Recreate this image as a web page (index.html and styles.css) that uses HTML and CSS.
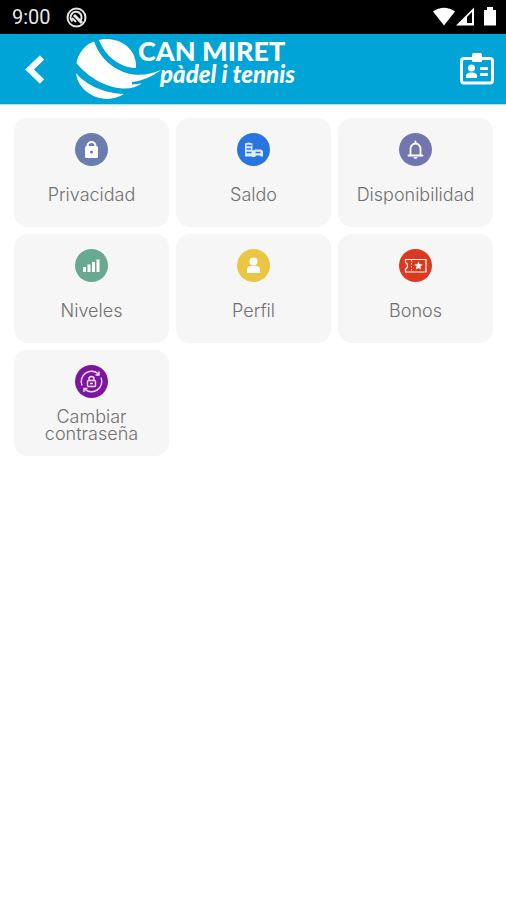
FILE: index.html
```html
<!DOCTYPE html>
<html lang="es">
<head>
<meta charset="utf-8">
<meta name="viewport" content="width=device-width, initial-scale=1">
<title>Can Miret</title>
<link rel="stylesheet" href="styles.css">
</head>
<body>
<div class="status">
  <span class="clock">9:00</span>
  <svg class="status-app" width="21" height="21" viewBox="0 0 21 21" fill="none" stroke="#e6e6e6" stroke-width="2"><circle cx="10.500" cy="10.500" r="9"/><path d="M6.500 14.500a5.500 5.500 0 1 1 8-1"/><path d="M8 8l8 8" stroke-width="3"/><path d="M6 11l4 4"/></svg>
  <svg class="status-signals" width="64" height="20" viewBox="0 0 64 20" fill="#fff"><path d="M0 4.500Q11 -3 22 4.500L11 18.500Z"/><path d="M23 18.500L41 0.500V18.500Z"/><path d="M34 10L39 5V16H34Z" fill="#000"/><path d="M51 3h3V0h6v3h3v15.500H51Z"/></svg>
</div>
<header class="bar">
  <button class="icon-button" aria-label="Volver"><svg width="20" height="29" viewBox="0 0 20 29" fill="none" stroke="#fff" stroke-width="6"><path d="M17 2.500L4.500 14.500L17 26.500"/></svg></button>
  <div class="brand">
    <svg class="brand-ball" width="86" height="64" viewBox="0 0 86 64" fill="#fff"><path d="M18 4.500C8 8 2 17 0.500 26C10 38 27 50 46 51.500C54 52 61 50 66 46.500L56 47.500V45Q72 43 85 33C76 37 66 38.500 58 37.500C38 35 24 21 18 4.500Z"/><path d="M23 3C37 -1 61 7 60 31C44 31 29 19 23 3Z"/><path d="M0 36C8 46 25 56 48 57C39 63 25 64 14 57C6 52 1 45 0 36Z"/></svg>
    <div class="brand-text">
      <span class="brand-name">CAN MIRET</span>
      <span class="brand-sub">pàdel i tennis</span>
    </div>
  </div>
  <button class="icon-button" aria-label="Carnet"><svg width="36" height="32" viewBox="0 0 36 32" fill="#fff"><rect x="2.500" y="5.500" width="31" height="24.500" rx="2.500" fill="none" stroke="#fff" stroke-width="3"/><rect x="13" y="0" width="10" height="9" rx="1.500"/><circle cx="12.500" cy="15" r="3.500"/><path d="M7 25v-2q0-3 4-3.500h3q4 .5 4 3.500v2Z"/><rect x="21" y="14" width="8" height="3" rx="1"/><rect x="21" y="20" width="8" height="3" rx="1"/></svg></button>
</header>
<main class="tiles">
  <button class="tile"><svg class="tile-icon" viewBox="0 0 33 33"><circle cx="16.500" cy="16.500" r="16.500" fill="#6b7caf"/><rect x="10" y="13" width="13" height="12" rx="1.500" fill="#fff"/><path d="M12.500 14v-1a4 4 0 0 1 8 0v1" fill="none" stroke="#fff" stroke-width="2"/><circle cx="16.500" cy="19" r="1.500" fill="#6b7caf"/></svg><span class="tile-label">Privacidad</span></button>
  <button class="tile"><svg class="tile-icon" viewBox="0 0 33 33"><circle cx="16.500" cy="16.500" r="16.500" fill="#2875df"/><path d="M8 10.500l3.500-1 4 1V23.500H8ZM15 18l3-1.500h6l2 1.500v5.500h-2l-1-1h-4l-1 1.500h-3Z" fill="#dcecff"/><path d="M9.500 12.500h5M9.500 16h4.500M9.500 19.500h5M18.500 19.500h5" stroke="#2875df" stroke-width="1.400"/></svg><span class="tile-label">Saldo</span></button>
  <button class="tile"><svg class="tile-icon" viewBox="0 0 33 33"><circle cx="16.500" cy="16.500" r="16.500" fill="#7276b0"/><path d="M9.500 22.500h14M11.500 22v-6a5 5.500 0 0 1 10 0v6M16.500 8.500v2" fill="none" stroke="#fff" stroke-width="1.800" stroke-linecap="round"/><path d="M14.500 24h4q-.5 2-2 2t-2-2Z" fill="#fff"/></svg><span class="tile-label">Disponibilidad</span></button>
  <button class="tile"><svg class="tile-icon" viewBox="0 0 33 33"><circle cx="16.500" cy="16.500" r="16.500" fill="#69a891"/><path d="M8 18h3v5H8ZM12.500 15.500h3V23h-3ZM17 13h3v10h-3ZM21.500 10.500h3V23h-3Z" fill="#fff"/></svg><span class="tile-label">Niveles</span></button>
  <button class="tile"><svg class="tile-icon" viewBox="0 0 33 33"><circle cx="16.500" cy="16.500" r="16.500" fill="#ebc645"/><circle cx="16.500" cy="12.500" r="4" fill="#fff"/><path d="M10 24v-3q0-4 4-4h5q4 0 4 4v3Z" fill="#fff"/></svg><span class="tile-label">Perfil</span></button>
  <button class="tile"><svg class="tile-icon" viewBox="0 0 33 33"><circle cx="16.500" cy="16.500" r="16.500" fill="#dc3921"/><path d="M6.500 10.500h20.500v12.500H6.500v-3q2-.5 2-3.200t-2-3.300Z" fill="none" stroke="#fff" stroke-width="1.200"/><path d="M12.500 11v12" stroke="#fff" stroke-width="1" stroke-dasharray="1.500 1.500"/><path d="M19.500 12.500l1.200 2.800 3 .2-2.300 2 .7 3-2.600-1.600-2.600 1.600.7-3-2.300-2 3-.2Z" fill="#fff"/></svg><span class="tile-label">Bonos</span></button>
  <button class="tile"><svg class="tile-icon" viewBox="0 0 33 33"><circle cx="16.500" cy="16.500" r="16.500" fill="#7d169f"/><g fill="none" stroke="#f3dcf8" stroke-width="1.400"><path d="M7 20.500A10.300 10.300 0 0 1 23.500 9M26 12.500A10.300 10.300 0 0 1 9.500 24M24 6.500v3.500h-3.500M9 27v-3.500h3.500"/><rect x="12.500" y="15.500" width="8" height="6" rx="1"/><path d="M14 15v-1a2.500 2.500 0 0 1 5 0v1M15 18.500h3"/></g></svg><span class="tile-label tile-label-long">Cambiar contraseña</span></button>
</main>
</body>
</html>
```
FILE: styles.css
```css
* {
  box-sizing: border-box;
}

body {
  margin: 0;
  background: #fff;
  font-family: Inter, "Open Sans", sans-serif;
}

button {
  border: 0;
  margin: 0;
  padding: 0;
  background: none;
  font: inherit;
  cursor: pointer;
}

svg {
  display: block;
}

.status {
  display: flex;
  align-items: center;
  height: 34px;
  padding: 0 9px 0 12px;
  background: #000;
  color: #e6e6e6;
}

.clock {
  font: 20px/34px Roboto, sans-serif;
}

.status-app {
  margin-left: 15px;
}

.status-signals {
  margin-left: auto;
}

.bar {
  display: flex;
  align-items: center;
  height: 71px;
  padding: 0 11px 0 25px;
  background: #00a4d6;
  border-bottom: 1px solid #b5e1f1;
}

.brand {
  display: flex;
  flex: 1;
  margin-left: 31px;
  color: #fff;
  white-space: nowrap;
}

.brand-ball {
  flex: none;
}

.brand-text {
  display: flex;
  flex-direction: column;
  margin-left: -24px;
}

.brand-name {
  font: 900 27px/28px Lato, sans-serif;
}

.brand-sub {
  margin-left: 22px;
  font: italic 900 24px/18px Lato, sans-serif;
}

.tiles {
  display: grid;
  grid-template-columns: repeat(3, 1fr);
  align-items: start;
  gap: 7px;
  padding: 13px 13px 14px 14px;
}

.tile {
  display: flex;
  flex-direction: column;
  align-items: center;
  padding: 15px 16px 14px;
  border-radius: 14px;
  background: #f6f6f6;
  color: #707070;
}

.tile-icon {
  width: 33px;
  height: 33px;
}

.tile-label {
  display: flex;
  align-items: center;
  min-height: 37px;
  margin-top: 10px;
  font-size: 18px;
  font-weight: 300;
  line-height: 17px;
  text-align: center;
}

.tile-label-long {
  min-height: 34px;
}
```
